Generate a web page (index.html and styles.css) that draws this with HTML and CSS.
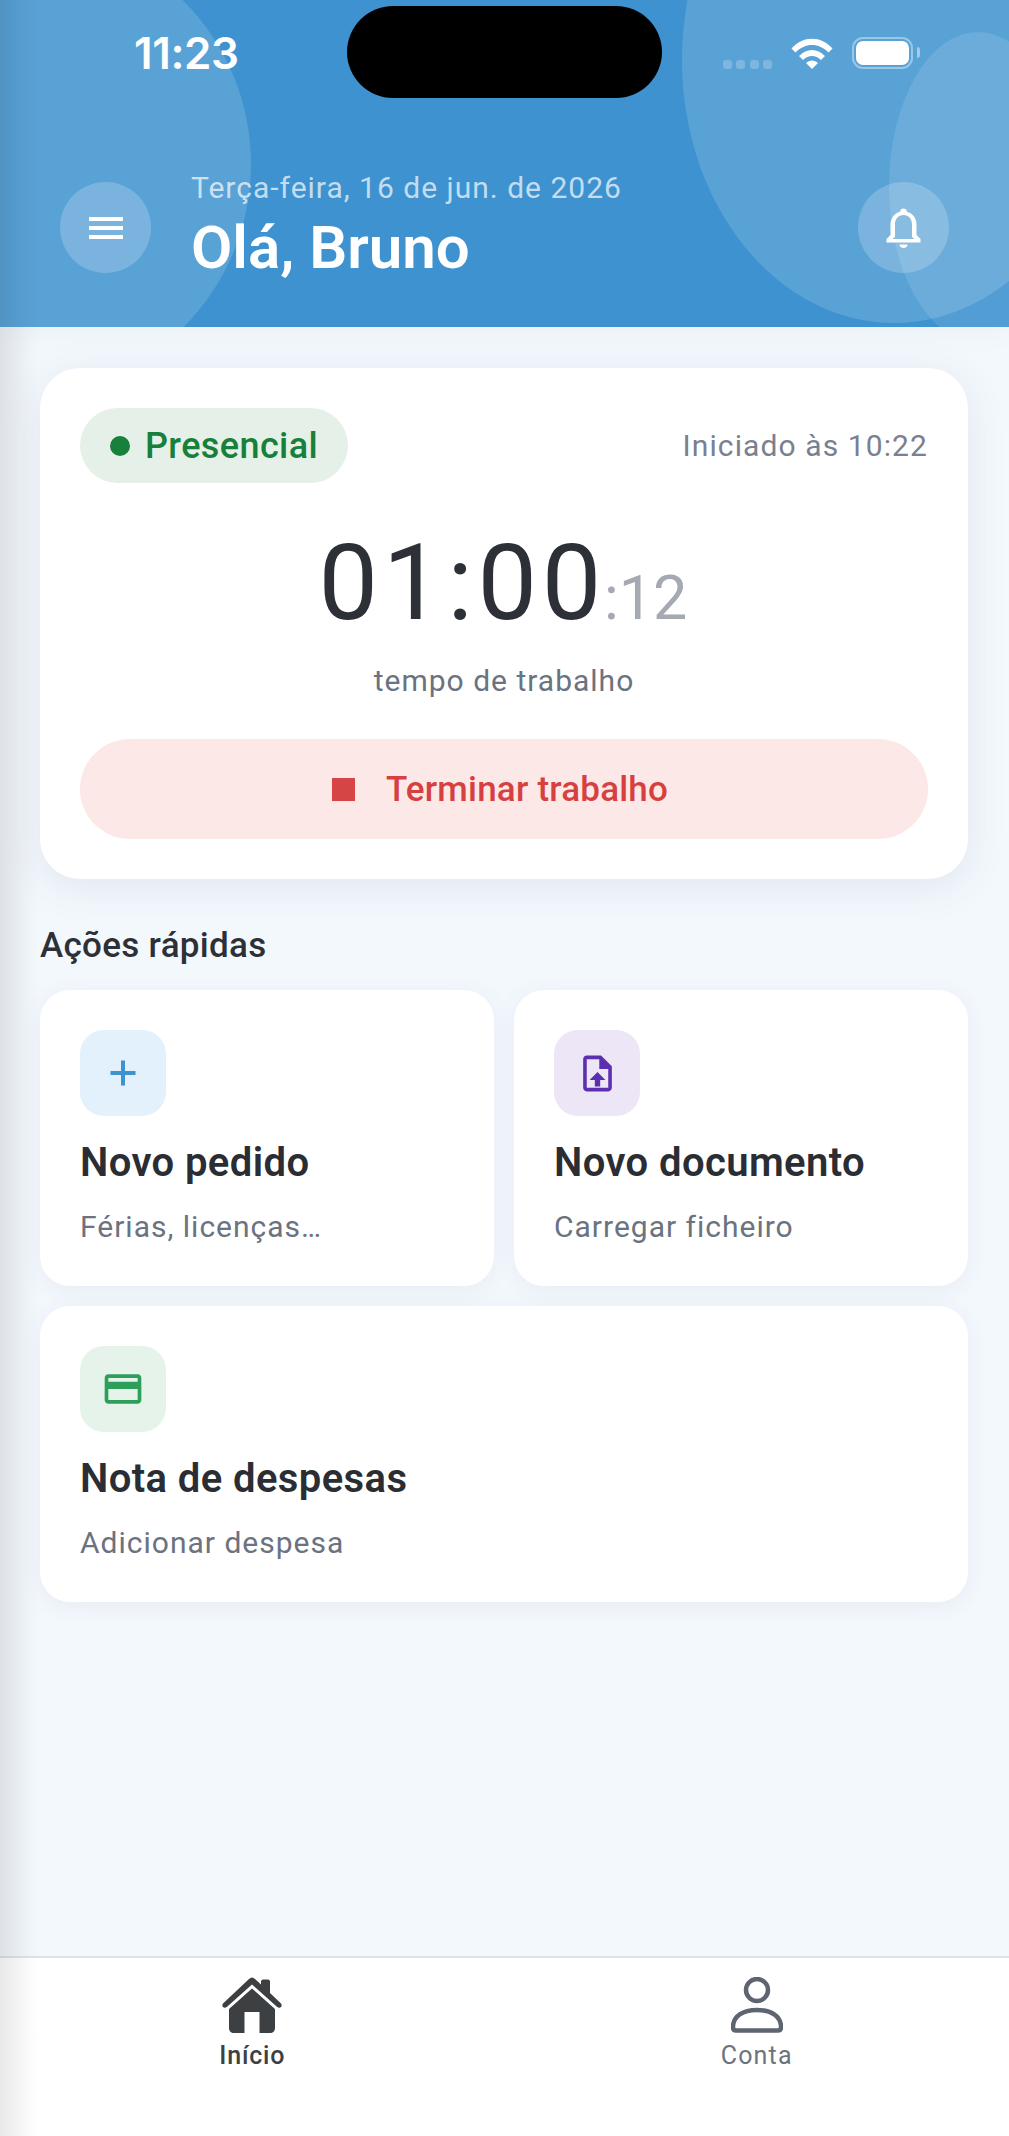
FILE: index.html
```html
<!DOCTYPE html>
<html lang="pt">
<head>
<meta charset="utf-8">
<title>Início</title>
<link rel="stylesheet" href="styles.css">
</head>
<body>
<div class="page">
  <header class="header">
    <span class="blob blob-left"></span>
    <span class="blob blob-right"></span>
    <span class="blob blob-far"></span>
    <div class="statusbar">
      <span class="clock">11:23</span>
      <span class="island"></span>
      <div class="status-icons">
        <span class="signal"><i></i><i></i><i></i><i></i></span>
        <svg class="wifi" viewBox="0 0 42 32" aria-hidden="true"><path d="M0.5 11.5C12 -1.5 30 -1.5 41.5 11.5L37.5 15.6C28 5.5 14 5.5 4.5 15.6Z"/><path d="M8 19C15.5 11 26.5 11 34 19L30 23.1C24.5 17.5 17.5 17.5 12 23.1Z"/><path d="M15 26C18.5 22.5 23.5 22.5 27 26L21 32Z"/></svg>
        <span class="battery"><span class="battery-fill"></span></span>
      </div>
    </div>
    <div class="greeting-row">
      <button class="round-btn" aria-label="Menu">
        <span class="burger"><i></i><i></i><i></i></span>
      </button>
      <div class="greeting">
        <div class="date">Terça-feira, 16 de jun. de 2026</div>
        <h1 class="hello">Olá, Bruno</h1>
      </div>
      <button class="round-btn" aria-label="Notificações">
        <svg class="bell" viewBox="0 0 35 40" aria-hidden="true"><path d="M17.5 0.5a3.5 3.5 0 0 1 3.4 3.2C27 5.2 30.5 10.5 30.5 16.5V27L34.5 31V34.500H0.5V31L4.500 27V16.5C4.500 10.5 8 5.200 14.100 3.700A3.500 3.500 0 0 1 17.500 0.500ZM17.500 7C12.500 7 9 10.800 9 16.500V29L6.500 31H28.500L26 29V16.500C26 10.800 22.500 7 17.500 7Z" fill-rule="evenodd"/><path d="M13.500 36.500H21.500C21.500 38.500 19.800 40 17.500 40S13.500 38.500 13.500 36.500Z"/></svg>
      </button>
    </div>
  </header>

  <main class="main">
    <section class="timer-card">
      <div class="timer-top">
        <span class="pill"><i class="pill-dot"></i>Presencial</span>
        <span class="started">Iniciado às 10:22</span>
      </div>
      <div class="clock-big"><span class="hm">01:00</span><span class="sec">:12</span></div>
      <div class="clock-label">tempo de trabalho</div>
      <button class="stop-btn"><i class="stop-square"></i>Terminar trabalho</button>
    </section>

    <h2 class="section-title">Ações rápidas</h2>
    <div class="actions">
      <article class="action">
        <span class="action-icon tint-blue">
          <svg viewBox="0 0 26 26" class="ico-plus" aria-hidden="true"><path d="M11 0.5h4v10.5h10.5v4H15v10.5h-4V15H0.5v-4H11z"/></svg>
        </span>
        <h3 class="action-title">Novo pedido</h3>
        <p class="action-sub">Férias, licenças…</p>
      </article>
      <article class="action">
        <span class="action-icon tint-purple">
          <svg viewBox="0 0 24 24" class="ico-doc" aria-hidden="true"><path d="M14 2H6c-1.100 0-2 .9-2 2v16c0 1.100.9 2 2 2h12c1.100 0 2-.9 2-2V8l-6-6zm4 18H6V4h7v5.500h5V20zM7.600 15.600L12 11.200l4.400 4.400h-2.900v3.600h-3v-3.600z"/></svg>
        </span>
        <h3 class="action-title">Novo documento</h3>
        <p class="action-sub">Carregar ficheiro</p>
      </article>
      <article class="action action-wide">
        <span class="action-icon tint-green">
          <svg viewBox="0 0 24 24" class="ico-card" aria-hidden="true"><path d="M20 4H4c-1.110 0-1.990.89-1.990 2L2 18c0 1.110.89 2 2 2h16c1.110 0 2-.89 2-2V6c0-1.110-.89-2-2-2zm0 14H4v-6h16v6zm0-10H4V6h16v2z"/></svg>
        </span>
        <h3 class="action-title">Nota de despesas</h3>
        <p class="action-sub">Adicionar despesa</p>
      </article>
    </div>
  </main>

  <nav class="tabbar">
    <a class="tab tab-active">
      <svg viewBox="0 0 60 56" class="tab-icon" aria-hidden="true"><path d="M30 0.500C31 0.500 32 1 33 2L39 7.500V4.500C39 3.500 39.800 2.500 41 2.500H46C47.200 2.500 48 3.500 48 4.500V16L58.500 26C60 27.500 60 29 59 30C58 31 56.500 31 55.200 30L30 7.500L4.800 30C3.500 31 2 31 1 30C0 29 0 27.500 1.500 26L27 2C28 1 29 0.500 30 0.500Z"/><path d="M30 11.500L53 32V51C53 54 51 56 48 56H37.500V35H22.500V56H12C9 56 7 54 7 51V32Z"/></svg>
      <span class="tab-label">Início</span>
    </a>
    <a class="tab">
      <svg viewBox="0 0 52 56" class="tab-icon tab-icon-user" aria-hidden="true"><circle cx="26" cy="13" r="11"/><path d="M2 50C2 39 12 33 26 33S50 39 50 50C50 52.500 49 53.500 47 53.500H5C3 53.500 2 52.500 2 50Z"/></svg>
      <span class="tab-label">Conta</span>
    </a>
  </nav>
  <div class="edge-shadow"></div>
</div>
</body>
</html>
```

FILE: styles.css
```css
* { box-sizing: border-box; }
html, body { margin: 0; padding: 0; }
body { font-family: Roboto, "Liberation Sans", sans-serif; background: #f3f8fd; }
h1, h2, h3, p { margin: 0; font: inherit; }
button { font: inherit; border: 0; padding: 0; }

.page {
  position: relative;
  width: 1009px;
  height: 2136px;
  display: flex;
  flex-direction: column;
  overflow: hidden;
  background: #f3f8fd;
}

/* header */
.header {
  position: relative;
  height: 327px;
  flex: none;
  background: #3d92cf;
  overflow: hidden;
  color: #fff;
  box-shadow: 0 4px 30px rgba(0,0,0,.04);
}
.blob { position: absolute; border-radius: 50%; background: rgba(255,255,255,.15); }
.blob-left { left: -211px; top: -67px; width: 462px; height: 462px; }
.blob-right { left: 682px; top: -203px; width: 424px; height: 526px; }
.blob-far { left: 889px; top: 32px; width: 178px; height: 310px; background: rgba(255,255,255,.11); }

.statusbar {
  position: relative;
  height: 104px;
  display: flex;
  align-items: flex-start;
}
.clock {
  position: absolute;
  left: 134px;
  top: 28px;
  font: 600 44px/50px Inter, Roboto, sans-serif;
  letter-spacing: -.4px;
}
.island {
  position: absolute;
  left: 347px;
  top: 6px;
  width: 315px;
  height: 92px;
  border-radius: 46px;
  background: #000;
}
.status-icons {
  position: absolute;
  left: 723px;
  top: 37px;
  display: flex;
  align-items: flex-start;
}
.signal { display: flex; gap: 4.300px; margin-top: 23px; margin-right: 19px; }
.signal i { width: 9px; height: 9px; border-radius: 3px; background: rgba(255,255,255,.22); }
.wifi { width: 42px; height: 32px; fill: #fff; margin-right: 19px; }
.battery {
  position: relative;
  width: 61px;
  height: 32px;
  border: 2.500px solid rgba(255,255,255,.4);
  border-radius: 11px;
  padding: 2px;
  display: block;
}
.battery::after {
  content: "";
  position: absolute;
  right: -9px;
  top: 8px;
  width: 3px;
  height: 11px;
  background: rgba(255,255,255,.45);
  border-radius: 0 3px 3px 0;
}
.battery-fill { display: block; height: 100%; background: #fff; border-radius: 7px; }

.greeting-row {
  position: relative;
  display: flex;
  align-items: flex-start;
  padding: 78px 60px 0 60px;
  gap: 40px;
}
.round-btn {
  flex: none;
  width: 91px;
  height: 91px;
  border-radius: 50%;
  background: rgba(255,255,255,.2);
  display: flex;
  align-items: center;
  justify-content: center;
  color: #fff;
}
.burger { display: flex; flex-direction: column; gap: 5px; width: 34px; }
.burger i { height: 4px; background: #fff; }
.bell { width: 35px; height: 40px; fill: #fff; }
.greeting { flex: 1; margin-top: -12px; }
.date {
  font-size: 30px;
  line-height: 36px;
  letter-spacing: 1px;
  color: rgba(255,255,255,.7);
}
.hello {
  margin-top: 7px;
  font-size: 60px;
  line-height: 70px;
  font-weight: 600;
}

/* main */
.main { flex: 1; padding: 41px 41px 0 40px; }
.timer-card {
  height: 511px;
  padding: 40px;
  border-radius: 40px;
  background: #fff;
  box-shadow: 0 8px 40px rgba(60,80,110,.1);
  display: flex;
  flex-direction: column;
}
.timer-top { display: flex; justify-content: space-between; align-items: center; }
.pill {
  display: flex;
  align-items: center;
  height: 75px;
  width: 268px;
  padding-left: 30px;
  border-radius: 38px;
  background: #e5f0e8;
  color: #17803a;
  font-size: 36px;
  font-weight: 500;
  letter-spacing: .4px;
}
.pill-dot { width: 20px; height: 20px; border-radius: 50%; background: #17803a; margin-right: 15px; }
.started { font-size: 30px; letter-spacing: 1.100px; color: #7a8090; }
.clock-big {
  display: flex;
  justify-content: center;
  align-items: baseline;
  margin-top: 38px;
  line-height: 124px;
  padding-right: 2px;
  font-weight: 400;
}
.hm { font-size: 106px; letter-spacing: 4.700px; color: #2d3036; margin-right: -2px; }
.sec { font-size: 61px; color: #a5aab2; }
.clock-label {
  text-align: center;
  font-size: 30px;
  line-height: 36px;
  letter-spacing: 1px;
  color: #6b7280;
  margin-top: 3px;
}
.stop-btn {
  margin-top: 40px;
  height: 100px;
  padding-right: 8px;
  border-radius: 50px;
  background: #fde8e8;
  color: #d64040;
  font-size: 35px;
  font-weight: 500;
  letter-spacing: .2px;
  display: flex;
  align-items: center;
  justify-content: center;
}
.stop-square { width: 23px; height: 23px; background: #d64545; margin-right: 31px; }

.section-title {
  margin-top: 47px;
  font-size: 35px;
  line-height: 40px;
  font-weight: 500;
  letter-spacing: .3px;
  color: #2d3036;
}
.actions {
  margin-top: 24px;
  display: grid;
  grid-template-columns: 1fr 1fr;
  gap: 20px;
}
.action {
  height: 296px;
  padding: 40px;
  border-radius: 30px;
  background: #fff;
  box-shadow: 0 4px 22px rgba(60,80,110,.07);
}
.action-wide { grid-column: 1 / -1; }
.action-icon {
  width: 86px;
  height: 86px;
  border-radius: 24px;
  display: flex;
  align-items: center;
  justify-content: center;
}
.tint-blue { background: #e3f1fc; }
.tint-purple { background: #ede6f6; }
.tint-green { background: #e6f3eb; }
.ico-plus { width: 26px; height: 26px; fill: #3d92cf; }
.ico-doc { width: 43px; height: 43px; fill: #5b2fb0; }
.ico-card { width: 44px; height: 44px; fill: #2e9e5b; }
.action-title {
  margin-top: 24px;
  font-size: 40px;
  line-height: 46px;
  font-weight: 600;
  letter-spacing: .4px;
  color: #2a2d33;
}
.action-sub {
  margin-top: 23px;
  font-size: 30px;
  line-height: 36px;
  letter-spacing: 1px;
  color: #6b7280;
}

/* tab bar */
.tabbar {
  flex: none;
  height: 180px;
  border-top: 2px solid #dfe2e6;
  background: #fff;
  display: grid;
  grid-template-columns: 1fr 1fr;
}
.tab {
  display: flex;
  flex-direction: column;
  align-items: center;
  padding-top: 19px;
  color: #6b7280;
}
.tab-active { color: #3c4043; }
.tab-icon { height: 56px; width: 60px; fill: #3c4043; }
.tab-icon-user { width: 52px; fill: none; stroke: #5f6570; stroke-width: 4.500; }
.tab-label { margin-top: 6px; font-size: 25px; line-height: 34px; font-weight: 400; letter-spacing: 1.200px; }
.tab-active .tab-label { font-weight: 500; letter-spacing: .8px; }

.edge-shadow {
  position: absolute;
  left: 0;
  top: 0;
  bottom: 0;
  width: 40px;
  background: linear-gradient(to right, rgba(0,0,0,.09), rgba(0,0,0,.02) 70%, rgba(0,0,0,0));
  pointer-events: none;
}
```
